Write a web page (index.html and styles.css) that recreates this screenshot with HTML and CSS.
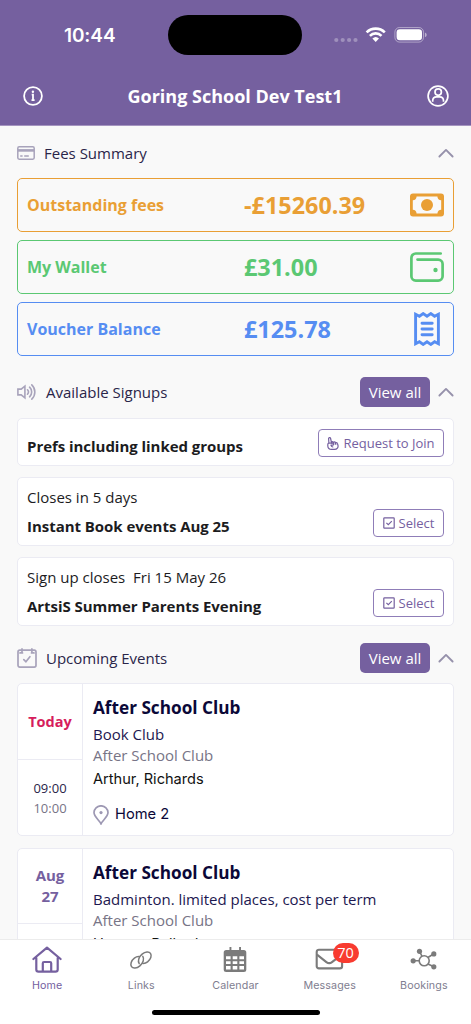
FILE: index.html
```html
<!DOCTYPE html>
<html lang="en">
<head>
<meta charset="utf-8">
<meta name="viewport" content="width=device-width, initial-scale=1">
<title>Goring School Dev Test1</title>
<link rel="stylesheet" href="styles.css">
</head>
<body>
<div class="app">
  <header class="top">
    <div class="status">
      <span class="clock">10:44</span>
      <span class="island"></span>
      <svg class="status-icons" width="96" height="20" viewBox="0 0 96 20" fill="#fff">
        <g opacity=".3"><circle cx="4.3" cy="15" r="2.1"/><circle cx="10.7" cy="15" r="2.1"/><circle cx="17.1" cy="15" r="2.1"/><circle cx="23.5" cy="15" r="2.1"/></g>
        <g fill="none" stroke="#fff" stroke-width="2.6">
          <path d="M34.6 7.4a12.8 12.8 0 0 1 18.2 0"/>
          <path d="M37.9 10.8a8.2 8.2 0 0 1 11.6 0"/>
        </g>
        <path d="M40.4 13.5a4.8 4.8 0 0 1 6.6 0l-3.3 3.4z"/>
        <rect x="62.9" y="2.5" width="28.6" height="14.6" rx="4.6" fill="none" stroke="#fff" opacity=".42"/>
        <rect x="64.6" y="4.3" width="25.4" height="11" rx="3.2"/>
        <path d="M92.9 7.4v4.8c1.3-.5 1.8-1.3 1.8-2.4s-.5-1.9-1.8-2.4z" opacity=".5"/>
      </svg>
    </div>
    <div class="titlebar">
      <svg width="20" height="20" viewBox="0 0 20 20" fill="none" stroke="#fff" stroke-width="1.8"><circle cx="10" cy="10" r="8.9"/><path d="M8.7 8.6H10v5.1M8.5 14.100h3.100" stroke-width="1.8"/><circle cx="9.9" cy="5.8" r="1.2" fill="#fff" stroke="none"/></svg>
      <h1>Goring School Dev Test1</h1>
      <svg width="22" height="22" viewBox="0 0 22 22" fill="none" stroke="#fff" stroke-width="1.7"><circle cx="11" cy="11" r="9.9"/><circle cx="11.2" cy="7.1" r="3.2"/><path d="M5.7 16.8v-1c0-2.4 1.7-4 3.9-4h3c2.3 0 3.9 1.6 3.9 4v1"/></svg>
    </div>
  </header>

  <main class="content">
    <section>
      <div class="section-head fees-head">
        <svg width="18" height="14" viewBox="0 0 18 14" fill="none" stroke="#a8a3bb" stroke-width="1.5"><rect x=".8" y=".8" width="16.4" height="12.4" rx="1.4"/><path d="M1 4.4h16" stroke-width="2.6"/><path d="M3.2 10.1h2.4M7.2 10.1h4.6"/></svg>
        <h2>Fees Summary</h2>
        <svg class="chev" width="16" height="10" viewBox="0 0 16 10"><path d="M1.4 8.5 8 1.9l6.6 6.6"/></svg>
      </div>
      <div class="fees">
        <div class="fee orange"><span class="label">Outstanding fees</span><span class="amount">-£15260.39</span>
          <svg width="34" height="34" viewBox="0 0 34 34"><path fill="currentColor" fill-rule="evenodd" d="M3 5.4h28a3 3 0 0 1 3 3v17a3 3 0 0 1-3 3H3a3 3 0 0 1-3-3v-17a3 3 0 0 1 3-3zM6.6 8.4A4.2 4.2 0 0 1 2.8 12.3v9.5a4.2 4.2 0 0 1 3.800 3.800h20.800a4.200 4.200 0 0 1 3.800-3.800v-9.500a4.200 4.200 0 0 1-3.800-3.900z"/><circle cx="17" cy="17" r="6" fill="currentColor"/></svg></div>
        <div class="fee green"><span class="label">My Wallet</span><span class="amount">£31.00</span>
          <svg width="34" height="34" viewBox="0 0 34 34" fill="none" stroke="currentColor" stroke-width="2.7" stroke-linecap="round"><path d="M30.7 3.5H5.8a4.4 4.4 0 0 0-4.4 4.4v18.400a4.400 4.400 0 0 0 4.400 4.400h22.400a4.400 4.400 0 0 0 4.400-4.400V14a4.400 4.400 0 0 0-4.400-4.400H7.500"/><circle cx="25.5" cy="20" r="2.2" fill="currentColor" stroke="none"/></svg></div>
        <div class="fee blue"><span class="label">Voucher Balance</span><span class="amount">£125.78</span>
          <svg width="34" height="34" viewBox="0 0 34 34" fill="none" stroke="currentColor" stroke-width="2.9"><path d="M5.6 2.3v29.4l3.8-2 3.8 2.7 3.8-2.7 3.8 2.7 3.8-2.7 3.8 2V2.3l-3.8 2-3.8-2.7L17 4.3l-3.8-2.7-3.8 2.7z"/><path d="M12 11.3h10.2M12 17h10.2M12 22.8h10.2" stroke-linecap="round"/></svg></div>
      </div>
    </section>

    <section>
      <div class="section-head signup-head">
        <svg width="20" height="16" viewBox="0 0 20 16" fill="none" stroke="#a8a3bb" stroke-width="1.6"><path d="M.9 5.1h3.3l3.7-3v11.8l-3.7-3H.9z"/><path d="M10.5 5.8a3.3 3.3 0 0 1 0 4.4M12.6 3.2a6.6 6.6 0 0 1 0 9.6M14.8.9a9.8 9.8 0 0 1 0 14.2" stroke-linecap="round"/></svg>
        <h2>Available Signups</h2>
        <a class="view-all">View all</a>
        <svg class="chev" width="16" height="10" viewBox="0 0 16 10"><path d="M1.4 8.5 8 1.9l6.6 6.6"/></svg>
      </div>
      <div class="signups">
        <article class="signup short">
          <div class="signup-text"><strong>Prefs including linked groups</strong></div>
          <a class="action join"><svg width="12" height="13" viewBox="0 0 12 13" fill="none" stroke="currentColor" stroke-width="1.2" stroke-linejoin="round" stroke-linecap="round"><path d="M1.9 6.2 1.6 1.8a1 1 0 0 1 2-.3l.8 3.7a1 1 0 0 1 1.7-.2l.4.6a1 1 0 0 1 1.900.1l.1.5a1 1 0 0 1 1.9.2l.5 1.6c.7 2.3-.8 4.4-3.5 4.4H4.600C2.300 12.400.9 11 .8 9V7.400c0-.8.4-1.200 1.100-1.200h3.700c1.200.1 1.200 1.900 0 1.900H3.900c.3 1 .9 1.600 1.900 1.900"/><path d="m4.4 5.2.2 1M6.5 5.6l.4 1.500M8.500 6.200l.3 1.200"/></svg>Request to Join</a>
        </article>
        <article class="signup">
          <div class="signup-text"><span>Closes in 5 days</span><strong>Instant Book events Aug 25</strong></div>
          <a class="action"><svg width="12" height="12" viewBox="0 0 12 12" fill="none" stroke="currentColor" stroke-width="1.2"><rect x=".8" y=".8" width="10.4" height="10.4" rx=".7"/><path d="m3.4 5.8 1.9 1.9 3.5-3.5"/></svg>Select</a>
        </article>
        <article class="signup">
          <div class="signup-text"><span>Sign up closes &nbsp;Fri 15 May 26</span><strong>ArtsiS Summer Parents Evening</strong></div>
          <a class="action"><svg width="12" height="12" viewBox="0 0 12 12" fill="none" stroke="currentColor" stroke-width="1.2"><rect x=".8" y=".8" width="10.4" height="10.4" rx=".7"/><path d="m3.4 5.8 1.9 1.9 3.5-3.5"/></svg>Select</a>
        </article>
      </div>
    </section>

    <section>
      <div class="section-head events-head">
        <svg width="20" height="20" viewBox="0 0 20 20" fill="none" stroke="#a8a3bb" stroke-width="1.7"><rect x="1" y="2.2" width="18" height="16.9" rx="1.8"/><path d="M5 .9v4M14.9.9v4M3 4.9h2.5m9 0H17M6.8 11.7l2.1 2 4-5" stroke-linecap="round"/></svg>
        <h2>Upcoming Events</h2>
        <a class="view-all">View all</a>
        <svg class="chev" width="16" height="10" viewBox="0 0 16 10"><path d="M1.4 8.5 8 1.9l6.6 6.6"/></svg>
      </div>
      <div class="events">
        <article class="event">
          <div class="when"><div class="day today">Today</div><div class="hours"><span>09:00</span><span class="end">10:00</span></div></div>
          <div class="detail">
            <h3>After School Club</h3>
            <p class="name">Book Club</p>
            <p class="club">After School Club</p>
            <p class="person">Arthur, Richards</p>
            <p class="place"><svg width="16" height="20" viewBox="0 0 16 20" fill="none" stroke="#9d98b3" stroke-width="1.7"><path d="M8 18.8C6.5 15.4 1 11.7 1 7.5a7 6.7 0 0 1 14 0c0 4.2-5.5 7.9-7 11.3z"/><circle cx="8" cy="7.6" r="1.6" fill="#9d98b3" stroke="none"/></svg>Home 2</p>
          </div>
        </article>
        <article class="event">
          <div class="when"><div class="day">Aug<br>27</div><div class="hours"></div></div>
          <div class="detail">
            <h3>After School Club</h3>
            <p class="name">Badminton. limited places, cost per term</p>
            <p class="club">After School Club</p>
            <p class="person">Haruna, Ballard</p>
          </div>
        </article>
      </div>
    </section>
  </main>

  <nav class="tabs">
    <a class="tab active"><svg width="30" height="28" viewBox="0 0 30 28" fill="none" stroke="currentColor" stroke-width="2.2" stroke-linecap="round" stroke-linejoin="round"><path d="M1.4 13 15 1.6 28.6 13M4.3 11.6v11.8a2.2 2.2 0 0 0 2.2 2.2h17a2.2 2.2 0 0 0 2.2-2.2V11.6M10.8 25.4v-8.2a1.2 1.2 0 0 1 1.2-1.2h6a1.2 1.2 0 0 1 1.2 1.2v8.2"/></svg><span>Home</span></a>
    <a class="tab"><svg width="30" height="28" viewBox="0 0 30 28" fill="none" stroke="currentColor" stroke-width="1.5" stroke-linecap="round"><path d="M13.2 17.600c-1.700-2.600-.4-6.700 2.900-9.400 3.200-2.600 6.900-2.900 8.400-.8 1.500 2.200.3 5.900-2.900 8.400-1.700 1.300-3.400 1.800-5 1.500"/><path d="M16.800 10.400c1.700 2.600.4 6.700-2.900 9.400-3.200 2.600-6.900 2.900-8.400.8-1.500-2.200-.3-5.900 2.900-8.400 1.700-1.300 3.400-1.800 5-1.500"/></svg><span>Links</span></a>
    <a class="tab"><svg width="30" height="28" viewBox="0 0 30 28"><path fill="currentColor" fill-rule="evenodd" d="M9.500 1.100h1.900v3h7.700v-3H21v3h2.800a2.500 2.500 0 0 1 2.500 2.500v16.800a2.500 2.500 0 0 1-2.500 2.500H6.200a2.500 2.500 0 0 1-2.500-2.500V6.600a2.500 2.500 0 0 1 2.500-2.500h3.300zM6 10.200v3h4.600v-3zm6.700 0v3h4.600v-3zm6.700 0v3H24v-3zM6 15.200V18h4.600v-2.800zm6.700 0V18h4.600v-2.800zm6.700 0V18H24v-2.800zM6 20v3.400h4.600V20zm6.700 0v3.400h4.600V20zm6.700 0v3.400H24V20z"/></svg><span>Calendar</span></a>
    <a class="tab"><svg width="30" height="28" viewBox="0 0 30 28" fill="none" stroke="currentColor" stroke-width="2.1"><rect x="1.7" y="3.7" width="25.4" height="18.7" rx="2.2"/><path d="m2 8.7 9.4 7.4c1.800 1.400 3.800 1.400 5.600 0L26.700 8.700"/></svg><b class="badge">70</b><span>Messages</span></a>
    <a class="tab"><svg width="30" height="28" viewBox="0 0 30 28" fill="none" stroke="currentColor" stroke-width="1.6"><circle cx="15.2" cy="14.8" r="5"/><path d="M10.2 14.8H4.5M13 10.3 10.7 5.5M18.900 11.500l6-3.800M18.900 18l6 2.800"/><g fill="currentColor" stroke="none"><circle cx="4.2" cy="14.8" r="2.6"/><circle cx="10.5" cy="5.300" r="2.6"/><circle cx="24.8" cy="7.9" r="2.6"/><circle cx="24.8" cy="20.800" r="2.6"/></g></svg><span>Bookings</span></a>
    <i class="home-indicator"></i>
  </nav>
</div>
</body>
</html>
```
FILE: styles.css
```css
* { box-sizing: border-box; margin: 0; padding: 0; }
body { font-family: "Open Sans", sans-serif; background: #f9f9f9; }
svg { display: block; flex: none; }
.app { height: 1024px; width: 471px; overflow: hidden; display: flex; flex-direction: column; background: #f9f9f9; }

.top { height: 126px; flex: none; background: #75609f; border-bottom: 1px solid #a595c0; color: #fff; }
.status { height: 69px; display: grid; grid-template-columns: 168px 134px 1fr; align-items: center; }
.clock { font: 600 19px/24px Inter, sans-serif; letter-spacing: -.1px; padding-left: 64px; padding-top: 2px; }
.island { height: 40px; border-radius: 20px; background: #000; }
.status-icons { margin-left: 30px; }
.titlebar { height: 54px; display: flex; align-items: center; justify-content: space-between; padding: 0 22px 0 23px; }
.titlebar h1 { font-size: 18px; line-height: 26px; font-weight: 700; }

.content { flex: 1; min-height: 0; overflow: hidden; padding: 0 17px; }
.section-head { display: flex; align-items: center; }
.section-head h2 { font-size: 15px; line-height: 22px; font-weight: 400; color: #2a2549; margin-left: 9px; margin-right: auto; }
.fees-head { height: 52px; padding-top: 2px; }
.chev { fill: none; stroke: #9691ab; stroke-width: 1.9; stroke-linecap: round; stroke-linejoin: round; }
.view-all { width: 70px; height: 30px; border-radius: 5px; background: #75609f; color: #fff; font-size: 15px; line-height: 30px; text-align: center; margin-right: 8px; }

.fees { display: flex; flex-direction: column; gap: 8px; }
.fee { height: 54px; border: 1px solid currentColor; border-radius: 5px; display: grid; grid-template-columns: 217px 1fr 34px; align-items: center; padding: 0 9px; }
.orange { color: #e99f35; }
.green { color: #5bc873; }
.blue { color: #568df2; }
.label { font-size: 16px; font-weight: 700; }
.amount { font-size: 23.4px; font-weight: 700; }

.signup-head { height: 62px; padding-top: 10px; }
.signups { display: flex; flex-direction: column; gap: 11px; }
.signup { height: 69px; background: #fff; border: 1px solid #ebebf3; border-radius: 5px; padding: 8px 9px; display: flex; justify-content: space-between; align-items: flex-end; color: #1c1c1e; font-size: 15px; }
.signup-text { display: flex; flex-direction: column; gap: 7px; line-height: 22px; }
.signup-text span { white-space: nowrap; }
.signup-text strong { font-weight: 700; letter-spacing: -.04px; }
.short { height: 48px; }
.action { height: 28px; border: 1px solid #8f7db8; border-radius: 4px; color: #75609f; font-size: 13px; line-height: 26px; display: flex; align-items: center; justify-content: center; gap: 4px; width: 71px; }
.join { width: 126px; }

.events-head { height: 57px; padding-top: 7px; }
.events { display: flex; flex-direction: column; gap: 12px; }
.event { height: 153px; flex: none; display: flex; background: #fff; border: 1px solid #ebebf3; border-radius: 5px; }
.when { width: 65px; border-right: 1px solid #ebebf3; display: flex; flex-direction: column; }
.day { height: 75px; border-bottom: 1px solid #ebebf3; color: #75609f; font-size: 15px; line-height: 21px; font-weight: 700; display: flex; align-items: center; justify-content: center; text-align: center; }
.today { height: 76px; color: #d61d5c; font-size: 14.5px; }
.hours { flex: 1; display: flex; flex-direction: column; justify-content: center; align-items: center; font-size: 13px; line-height: 20px; color: #2a2549; }
.hours .end { color: #777486; }
.detail { padding: 10px 0 0 10px; color: #0b0838; font-size: 15px; line-height: 21px; }
.detail h3 { font-size: 17.2px; line-height: 27px; font-weight: 700; margin-bottom: 3px; }
.detail .name { color: #1d1850; }
.detail .club { color: #777486; }
.detail .person { font-family: Inter, sans-serif; font-size: 14.6px; color: #111; margin-top: 3px; }
.detail .place { font-family: Inter, sans-serif; font-size: 14.7px; display: flex; align-items: center; gap: 6px; margin-top: 14px; }

.tabs { position: relative; height: 85px; flex: none; background: #fff; border-top: 1px solid #ececec; display: grid; grid-template-columns: repeat(5, 1fr); }
.tab { position: relative; display: flex; flex-direction: column; align-items: center; padding-top: 6px; color: #7b7b7b; }
.tab span { font: 400 10.7px/14px Inter, sans-serif; color: #807d8f; margin-top: 5px; letter-spacing: .1px; }
.active, .tab.active span { color: #75609f; }
.badge { position: absolute; left: 50px; top: 3px; width: 26px; height: 20px; border-radius: 10px; background: #f83b30; color: #fff; font-size: 14.5px; line-height: 20px; font-weight: 400; text-align: center; }
.home-indicator { position: absolute; left: 152px; top: 70px; width: 168px; height: 5px; border-radius: 3px; background: #000; }
```
